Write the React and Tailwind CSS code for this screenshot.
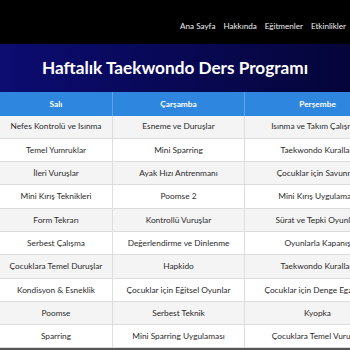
import React from "react";

const rows = [
  ["Nefes Kontrolü ve Isınma", "Esneme ve Duruşlar", "Isınma ve Takım Çalışması"],
  ["Temel Yumruklar", "Mini Sparring", "Taekwondo Kuralları"],
  ["İleri Vuruşlar", "Ayak Hızı Antrenmanı", "Çocuklar için Savunma"],
  ["Mini Kırış Teknikleri", "Poomse 2", "Mini Kırış Uygulaması"],
  ["Form Tekrarı", "Kontrollü Vuruşlar", "Sürat ve Tepki Oyunları"],
  ["Serbest Çalışma", "Değerlendirme ve Dinlenme", "Oyunlarla Kapanış"],
  ["Çocuklara Temel Duruşlar", "Hapkido", "Taekwondo Kuralları"],
  ["Kondisyon & Esneklik", "Çocuklar için Eğitsel Oyunlar", "Çocuklar için Denge Egzersizi"],
  ["Poomse", "Serbest Teknik", "Kyopka"],
  ["Sparring", "Mini Sparring Uygulaması", "Çocuklara Temel Vuruşlar"],
];

const widths = ["w-[113px]", "w-[132px]", "w-[146px]"];

export default function App() {
  return (
    <div className="w-[350px] h-[350px] overflow-hidden bg-[#eeeeee] font-['Lato',sans-serif] antialiased">
      <header className="h-[44px] bg-black flex items-center justify-end pr-[4px] pt-[9px] gap-[8px] text-[8.1px] text-[#eeeeee] whitespace-nowrap">
        <span>Ana Sayfa</span>
        <span>Hakkında</span>
        <span>Eğitmenler</span>
        <span>Etkinlikler</span>
      </header>
      <div className="h-[48px] bg-gradient-to-r from-[#0c0c72] to-[#05053a] flex items-center justify-center">
        <h1 className="text-[17.2px] font-bold text-white whitespace-nowrap">Haftalık Taekwondo Ders Programı</h1>
      </div>
      <div className="w-[600px] text-[8.3px]">
        <div className="flex h-[23.5px] bg-[#2e86de] text-white font-bold">
          {["Salı", "Çarşamba", "Perşembe"].map((h, i) => (
            <div key={h} className={`${widths[i]} shrink-0 flex items-center justify-center border-r border-[#5fa3e8]`}>{h}</div>
          ))}
        </div>
        {rows.map((r, ri) => (
          <div key={ri} className={`flex h-[23.3px] border-b border-[#dddddd] text-[#2b2b2b] ${ri % 2 === 0 ? "bg-[#f4f4f4]" : "bg-white"}`}>
            {r.map((c, ci) => (
              <div key={ci} className={`${widths[ci]} shrink-0 flex items-center justify-center border-r border-[#dddddd] whitespace-nowrap`}>{c}</div>
            ))}
          </div>
        ))}
        <div className="h-[2px] bg-[#555555]" />
      </div>
    </div>
  );
}
